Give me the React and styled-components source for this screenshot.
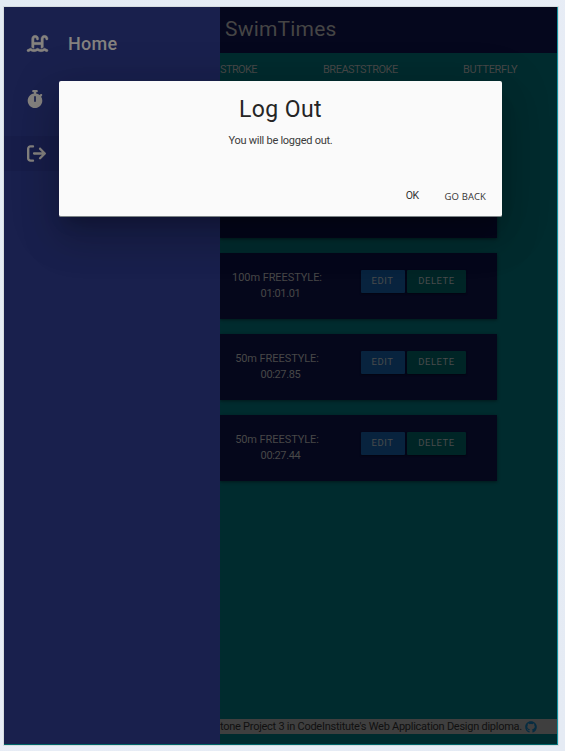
import React from "react";
import styled, { createGlobalStyle } from "styled-components";
import { FaWaterLadder, FaStopwatch, FaArrowRightFromBracket, FaGithub } from "react-icons/fa6";

const Global = createGlobalStyle`
  * { box-sizing: border-box; }
  body { margin: 0; background: #e8edf5; font-family: Roboto, "Liberation Sans", sans-serif; }
`;

const Canvas = styled.div`
  height: 751px;
  padding: 7px 7px 6px 4px;
  background: linear-gradient(115deg, #e3ebf3, #e8edf6 45%, #e5ebf4);
  overflow: hidden;
`;

const Frame = styled.div`
  position: relative;
  display: grid;
  grid-template-columns: 216px 1fr;
  width: 554px;
  height: 738px;
  background: #002b2e;
  border-right: 1px solid #1493a3;
  border-bottom: 1px solid #006468;
  box-shadow: 0 0 0 1px #d5dcdf;
`;

const Drawer = styled.nav`
  display: flex;
  flex-direction: column;
  padding-top: 9px;
  background: #19204d;
`;

const NavItem = styled.div`
  display: grid;
  grid-template-columns: 41px 1fr;
  align-items: center;
  height: ${(p) => (p.$active ? 35 : 55)}px;
  margin-top: ${(p) => (p.$active ? 10 : 0)}px;
  padding-left: ${(p) => p.$inset ?? 23}px;
  background: ${(p) => (p.$active ? "#171d49" : "transparent")};
  color: #85827f;
  font-size: 18px;
  font-weight: 500;
  letter-spacing: 0.25px;
  svg { display: block; }
`;

const LadderIcon = styled(FaWaterLadder)`
  overflow: visible;
  stroke: currentColor;
  stroke-width: 12px;
`;

const Main = styled.main`
  display: flex;
  flex-direction: column;
  min-width: 0;
  overflow: hidden;
  color: #484848;
`;

const Header = styled.header`
  flex: none;
  height: 46px;
  padding-left: 5px;
  background: #05071d;
  color: #454545;
  font-size: 21px;
  line-height: 44px;
  letter-spacing: 0.2px;
`;

const Tabs = styled.div`
  display: grid;
  grid-template-columns: 103px 140px 1fr;
  flex: none;
  height: 33px;
  font-size: 11px;
  line-height: 33px;
`;

const Tab = styled.span`
  letter-spacing: ${(p) => p.$spacing}px;
  white-space: nowrap;
`;

const List = styled.div`
  display: grid;
  flex: none;
  grid-auto-rows: 66px;
  row-gap: 15.2px;
  width: 277px;
  padding-top: 85.6px;
`;

const TimeCard = styled.article`
  display: grid;
  grid-template-columns: 120px 1fr;
  column-gap: 20.5px;
  background: #05071b;
  box-shadow: 0 1px 3px rgba(0, 0, 0, 0.45);
`;

const TimeLabel = styled.div`
  display: flex;
  flex-direction: column;
  align-items: center;
  padding-top: 17px;
  margin-left: -6px;
  white-space: nowrap;
  font-size: 11px;
  line-height: 16px;
  letter-spacing: -0.07px;
`;

const TimeValue = styled.span`
  padding-left: 7px;
  letter-spacing: -0.35px;
`;

const Actions = styled.div`
  display: flex;
  gap: 2.5px;
  padding-top: 17px;
`;

const ActionButton = styled.button`
  width: ${(p) => (p.$danger ? 59 : 44)}px;
  height: 23px;
  padding: 0 0 2px;
  border: 0;
  border-radius: 1px;
  background: ${(p) => (p.$danger ? "#002526" : "#08233e")};
  color: #484b4c;
  font: 9.5px Roboto, sans-serif;
  letter-spacing: 0.5px;
  box-shadow: 0 1px 2px rgba(0, 0, 0, 0.4);
`;

const Footer = styled.footer`
  display: flex;
  align-items: center;
  flex: none;
  gap: 3px;
  height: 15px;
  margin-top: auto;
  margin-bottom: 10px;
  background: #3f3f3f;
  color: #101010;
  font-size: 11px;
  letter-spacing: -0.26px;
  white-space: nowrap;
  svg { flex: none; color: #062c41; }
`;

const Dialog = styled.section`
  position: absolute;
  top: 74px;
  left: 55px;
  display: flex;
  flex-direction: column;
  width: 443px;
  height: 136px;
  padding-top: 14px;
  border-radius: 2px;
  background: #fafafa;
  border-bottom: 1px solid #7c8486;
  color: #252525;
  text-align: center;
  box-shadow: 0 24px 38px 3px rgba(0, 0, 0, 0.14), 0 9px 46px 8px rgba(0, 0, 0, 0.12),
    0 11px 15px -7px rgba(0, 0, 0, 0.2);
`;

const DialogTitle = styled.h1`
  margin: 0;
  font-size: 23px;
  font-weight: 400;
  line-height: 29px;
  letter-spacing: 0.4px;
`;

const DialogText = styled.p`
  margin: 9px 0 0;
  color: #3b3b3b;
  font-size: 11px;
  line-height: 16px;
  letter-spacing: -0.26px;
`;

const DialogActions = styled.div`
  display: flex;
  justify-content: flex-end;
  gap: 26px;
  margin-top: 36px;
  padding-right: 16px;
`;

const DialogButton = styled.button`
  height: 20px;
  padding: ${(p) => (p.$plain ? "2px 0 0" : "0")};
  border: 0;
  background: none;
  color: #343434;
  font-family: ${(p) => (p.$plain ? '"Open Sans"' : "Roboto")}, sans-serif;
  font-size: ${(p) => (p.$plain ? 9.5 : 10.5)}px;
  letter-spacing: ${(p) => (p.$plain ? 0.1 : -0.5)}px;
`;

const times = [
  ["50m FREESTYLE:", "00:27.90"],
  ["100m FREESTYLE:", "01:01.01"],
  ["50m FREESTYLE:", "00:27.85"],
  ["50m FREESTYLE:", "00:27.44"],
];

export default function App() {
  return (
    <>
      <Global />
      <Canvas>
        <Frame>
          <Drawer>
            <NavItem><LadderIcon size={21} /><span>Home</span></NavItem>
            <NavItem $inset={22}><FaStopwatch size={18} /></NavItem>
            <NavItem $active $inset={22.5}><FaArrowRightFromBracket size={19} /></NavItem>
          </Drawer>
          <Main>
            <Header>SwimTimes</Header>
            <Tabs>
              <Tab $spacing={-0.6}>STROKE</Tab>
              <Tab $spacing={-0.5}>BREASTSTROKE</Tab>
              <Tab $spacing={-0.38}>BUTTERFLY</Tab>
            </Tabs>
            <List>
              {times.map(([event, time], i) => (
                <TimeCard key={time}>
                  {i > 0 && (
                    <>
                      <TimeLabel>
                        <span>{event}</span>
                        <TimeValue>{time}</TimeValue>
                      </TimeLabel>
                      <Actions>
                        <ActionButton>EDIT</ActionButton>
                        <ActionButton $danger>DELETE</ActionButton>
                      </Actions>
                    </>
                  )}
                </TimeCard>
              ))}
            </List>
            <Footer>
              <span>tone Project 3 in CodeInstitute's Web Application Design diploma.</span>
              <FaGithub size={12} />
            </Footer>
          </Main>
          <Dialog role="dialog">
            <DialogTitle>Log Out</DialogTitle>
            <DialogText>You will be logged out.</DialogText>
            <DialogActions>
              <DialogButton>OK</DialogButton>
              <DialogButton $plain>GO BACK</DialogButton>
            </DialogActions>
          </Dialog>
        </Frame>
      </Canvas>
    </>
  );
}
